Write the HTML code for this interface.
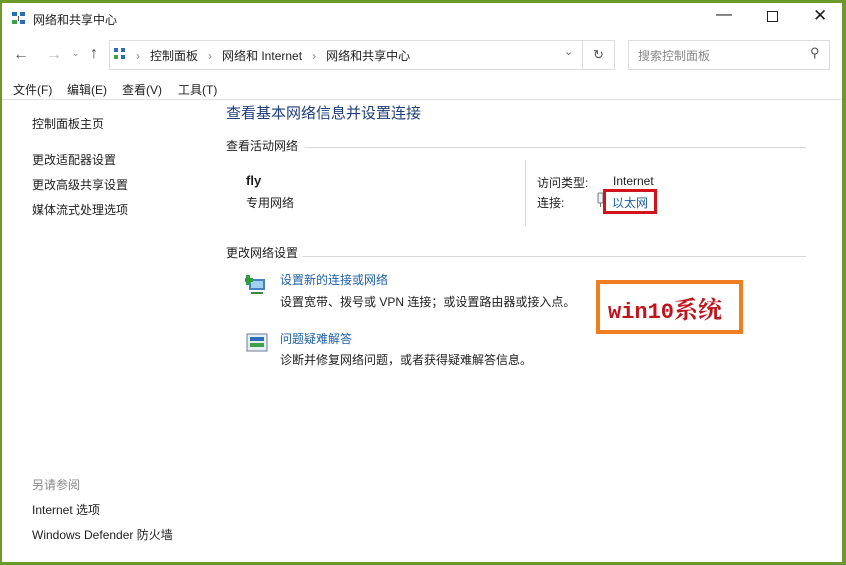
<!DOCTYPE html>
<html><head><meta charset="utf-8"><style>
*{margin:0;padding:0;box-sizing:border-box}
body{width:846px;height:565px;background:#6b9a2a;position:relative;overflow:hidden;font-family:"Liberation Sans","Noto Sans CJK SC",sans-serif;font-size:12px;color:#1e1e1e}
#win{position:absolute;left:2px;top:3px;width:840px;height:559px;background:#fff}
.a{position:absolute;white-space:nowrap}
.link{color:#1d5fa8}
.blue{color:#1e3f7a}
.hl{position:absolute;height:1px;background:#d8d8d8}
</style></head><body>
<div id="win">
<svg class="a" style="left:9px;top:8px" width="16" height="16"><rect x="1" y="1" width="5" height="4" fill="#2a6db5"/><rect x="9" y="1" width="5" height="4" fill="#2a6db5"/><rect x="1" y="9" width="5" height="4" fill="#3fa04a"/><rect x="9" y="9" width="5" height="4" fill="#2a6db5"/><rect x="7" y="5" width="1" height="5" fill="#555"/></svg>
<div class="a" style="left:31px;top:8px;font-size:12px">网络和共享中心</div>
<div class="a" style="left:714px;top:3px;font-size:16px">—</div>
<div class="a" style="left:765px;top:8px;width:11px;height:11px;border:1px solid #222"></div>
<div class="a" style="left:811px;top:3px;font-size:17px">✕</div>
<div class="a" style="left:11px;top:43px;font-size:16px;color:#555">←</div>
<div class="a" style="left:44px;top:43px;font-size:16px;color:#bbb">→</div>
<div class="a" style="left:70px;top:45px;font-size:9px;color:#888">⌄</div>
<div class="a" style="left:88px;top:42px;font-size:16px;color:#444">↑</div>
<div class="a" style="left:107px;top:37px;width:474px;height:30px;border:1px solid #dcdcdc"></div>
<div class="a" style="left:581px;top:37px;width:32px;height:30px;border:1px solid #dcdcdc;border-left:none;text-align:center;line-height:28px;color:#555;font-size:13px">↻</div>
<svg class="a" style="left:111px;top:44px" width="14" height="14"><rect x="1" y="1" width="4" height="4" fill="#2a6db5"/><rect x="8" y="1" width="4" height="4" fill="#2a6db5"/><rect x="1" y="8" width="4" height="4" fill="#3fa04a"/><rect x="8" y="8" width="4" height="4" fill="#2a6db5"/></svg>
<div class="a" style="left:134px;top:44px;font-size:12px"><span style="color:#888">›</span>&nbsp;&nbsp; 控制面板 &nbsp;&nbsp;<span style="color:#888">›</span>&nbsp;&nbsp; 网络和 Internet &nbsp;&nbsp;<span style="color:#888">›</span>&nbsp;&nbsp; 网络和共享中心</div>
<div class="a" style="left:562px;top:42px;color:#666;font-size:11px">⌄</div>
<div class="a" style="left:626px;top:37px;width:202px;height:30px;border:1px solid #dcdcdc"></div>
<div class="a" style="left:636px;top:44px;color:#888">搜索控制面板</div>
<div class="a" style="left:808px;top:42px;color:#555;font-size:13px">⚲</div>
<div class="a" style="left:11px;top:78px">文件(F)</div>
<div class="a" style="left:65px;top:78px">编辑(E)</div>
<div class="a" style="left:120px;top:78px">查看(V)</div>
<div class="a" style="left:176px;top:78px">工具(T)</div>
<div class="hl" style="left:0;top:96px;width:840px;background:#e2e2e2"></div>
<div class="a" style="left:30px;top:112px">控制面板主页</div>
<div class="a" style="left:30px;top:148px">更改适配器设置</div>
<div class="a" style="left:30px;top:173px">更改高级共享设置</div>
<div class="a" style="left:30px;top:198px">媒体流式处理选项</div>
<div class="a" style="left:30px;top:473px;color:#888">另请参阅</div>
<div class="a" style="left:30px;top:498px">Internet 选项</div>
<div class="a" style="left:30px;top:523px">Windows Defender 防火墙</div>
<div class="a blue" style="left:224px;top:99px;font-size:15px">查看基本网络信息并设置连接</div>
<div class="a" style="left:224px;top:134px">查看活动网络</div>
<div class="hl" style="left:303px;top:144px;width:501px"></div>
<div class="a" style="left:244px;top:170px;font-size:13px;font-weight:bold">fly</div>
<div class="a" style="left:244px;top:191px">专用网络</div>
<div style="position:absolute;left:523px;top:157px;width:1px;height:66px;background:#d8d8d8"></div>
<div class="a" style="left:535px;top:171px">访问类型:</div>
<div class="a" style="left:611px;top:171px">Internet</div>
<div class="a" style="left:535px;top:191px">连接:</div>
<svg class="a" style="left:595px;top:189px" width="8" height="16"><rect x="1" y="1" width="5" height="10" rx="1" fill="#eef" stroke="#777"/><rect x="3" y="11" width="1" height="4" fill="#777"/></svg>
<div class="a" style="left:601px;top:186px;width:54px;height:25px;border:3px solid #d3131b"></div>
<div class="a link" style="left:610px;top:191px">以太网</div>
<div class="a" style="left:224px;top:241px">更改网络设置</div>
<div class="hl" style="left:300px;top:253px;width:504px"></div>
<svg class="a" style="left:243px;top:270px" width="24" height="24"><rect x="4" y="6" width="16" height="11" fill="#4a7fc1"/><rect x="6" y="8" width="12" height="7" fill="#9fd0f0"/><path d="M3 2v10M-2 7h10" stroke="#2e9e3a" stroke-width="4"/><rect x="6" y="19" width="12" height="2" fill="#3a8a3a"/></svg>
<div class="a link" style="left:278px;top:268px">设置新的连接或网络</div>
<div class="a" style="left:278px;top:290px">设置宽带、拨号或 VPN 连接；或设置路由器或接入点。</div>
<svg class="a" style="left:243px;top:328px" width="24" height="24"><rect x="2" y="3" width="20" height="17" fill="#e8eef5" stroke="#6a7c90"/><rect x="5" y="6" width="14" height="4" fill="#2b6fb8"/><rect x="5" y="12" width="14" height="4" fill="#3fa04a"/></svg>
<div class="a link" style="left:278px;top:327px">问题疑难解答</div>
<div class="a" style="left:278px;top:348px">诊断并修复网络问题，或者获得疑难解答信息。</div>
<div class="a" style="left:594px;top:277px;width:147px;height:54px;border:4px solid #ef7d22"></div>
<div class="a" style="left:606px;top:287px;font-family:'Liberation Mono','Noto Serif CJK SC',monospace;font-size:24px;font-weight:bold;color:#c0141c"><span style="font-size:22px">win10</span><span style="font-family:'Noto Serif CJK SC',serif">系统</span></div>
</div>
</body></html>
